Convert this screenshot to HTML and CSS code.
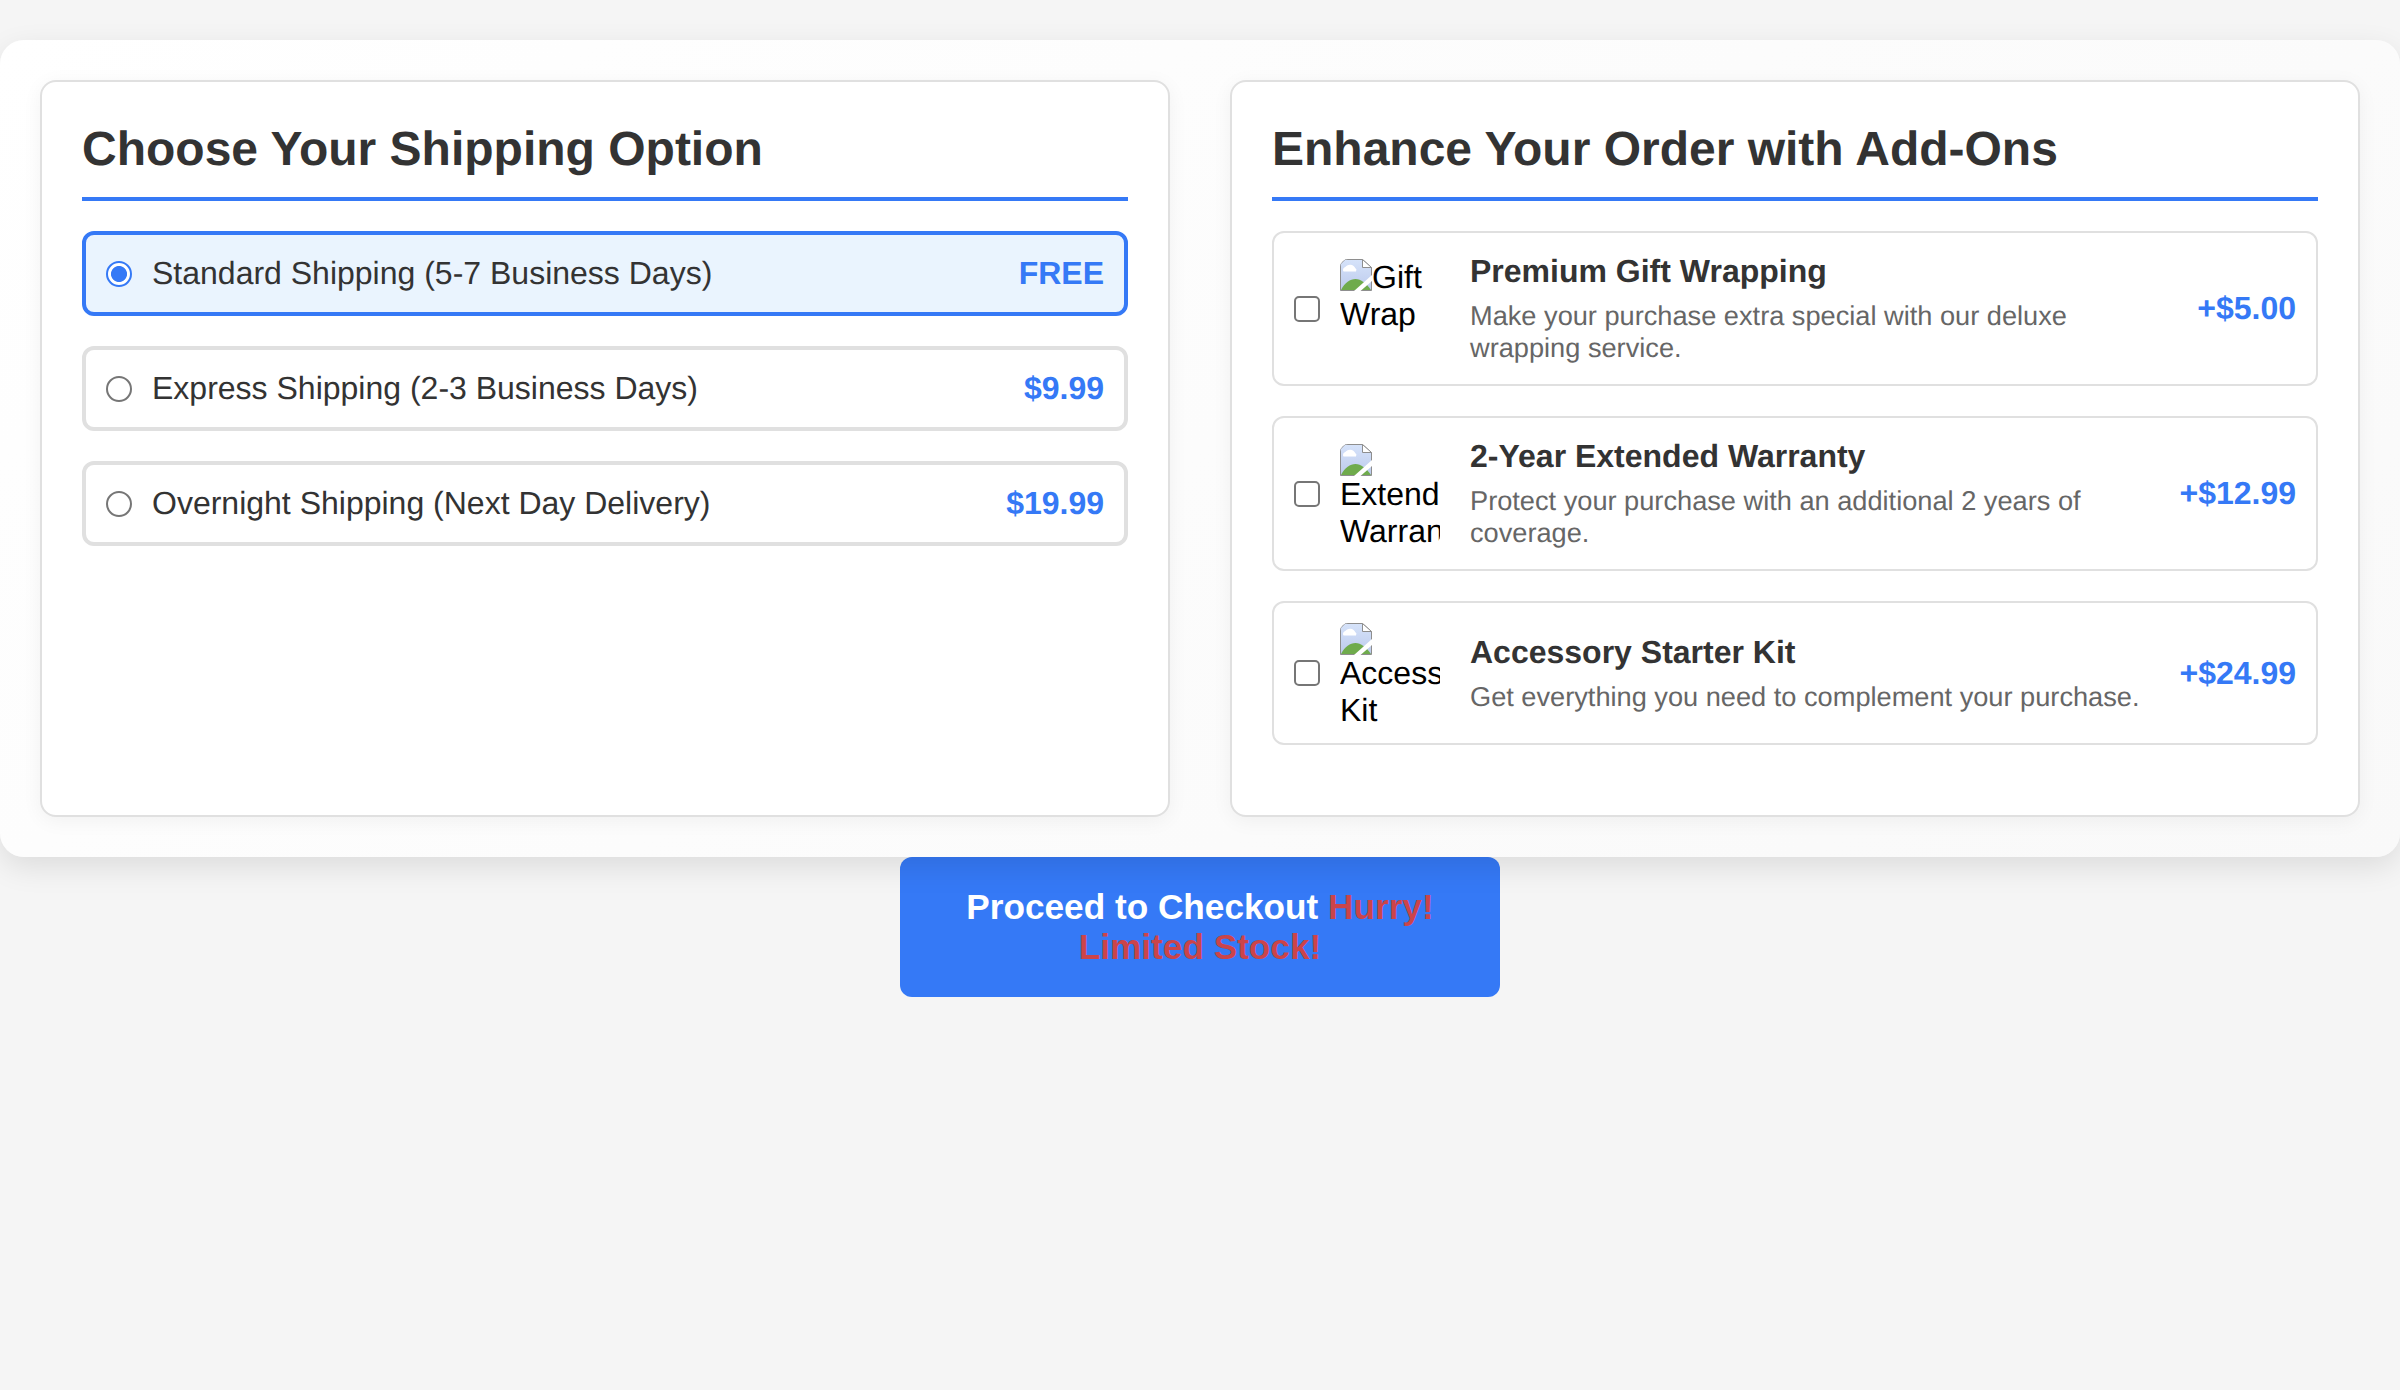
FILE: index.html
```html
<!DOCTYPE html>
<html lang="en">
<head>
<meta charset="utf-8">
<title>Shipping and Add-Ons</title>
<link rel="stylesheet" href="styles.css">
</head>
<body>
<svg class="defs" width="0" height="0" aria-hidden="true">
  <defs>
    <linearGradient id="sky" x1="0" y1="0" x2="0" y2="1"><stop offset="0" stop-color="#d6e3fa"/><stop offset="1" stop-color="#bccaec"/></linearGradient>
    <symbol id="missing" viewBox="0 0 32 32">
      <path d="M5 .5H22.500L31.500 8.500V31.500H.5V5Z" fill="url(#sky)"/>
      <path d="M3.500 12.500a3 3 0 0 1 1.800-4.600A6 6 0 0 1 15.200 9a2.600 2.600 0 0 1 .8 3.500Z" fill="#fff"/>
      <path d="M1 31C5 23.500 10 20 15.500 20S26 24 31 31Z" fill="#6fab4c"/>
      <path d="M5 .5H22.500L31.500 8.500V31.500H.5V5Z" fill="none" stroke="#8e8e8e"/>
      <path d="M22.500 .5V8.500H31.500Z" fill="#fff" stroke="#8e8e8e"/>
      <path d="M14 32 32 16V22L20.500 32Z" fill="#fff"/>
    </symbol>
  </defs>
</svg>
<main class="container">
  <section class="card">
    <h2 class="heading">Choose Your Shipping Option</h2>
    <label class="option selected"><input class="control radio" type="radio" name="shipping" checked><span class="option-name">Standard Shipping (5-7 Business Days)</span><span class="price">FREE</span></label>
    <label class="option"><input class="control radio" type="radio" name="shipping"><span class="option-name">Express Shipping (2-3 Business Days)</span><span class="price">$9.99</span></label>
    <label class="option"><input class="control radio" type="radio" name="shipping"><span class="option-name">Overnight Shipping (Next Day Delivery)</span><span class="price">$19.99</span></label>
  </section>
  <section class="card">
    <h2 class="heading">Enhance Your Order with Add-Ons</h2>
    <label class="addon">
      <input class="control" type="checkbox">
      <span class="thumb"><svg class="missing"><use href="#missing"/></svg>Gift Wrap</span>
      <span class="info"><span class="title">Premium Gift Wrapping</span><span class="desc">Make your purchase extra special with our deluxe wrapping service.</span></span>
      <span class="price">+$5.00</span>
    </label>
    <label class="addon">
      <input class="control" type="checkbox">
      <span class="thumb"><svg class="missing own-line"><use href="#missing"/></svg>Extended Warranty</span>
      <span class="info"><span class="title">2-Year Extended Warranty</span><span class="desc">Protect your purchase with an additional 2 years of coverage.</span></span>
      <span class="price">+$12.99</span>
    </label>
    <label class="addon">
      <input class="control" type="checkbox">
      <span class="thumb"><svg class="missing own-line"><use href="#missing"/></svg>Accessory Kit</span>
      <span class="info"><span class="title">Accessory Starter Kit</span><span class="desc">Get everything you need to complement your purchase.</span></span>
      <span class="price">+$24.99</span>
    </label>
  </section>
</main>
<button class="checkout">Proceed to Checkout <span class="urgent">Hurry! Limited Stock!</span></button>
</body>
</html>
```
FILE: styles.css
```css
* { box-sizing: border-box; }
body {
  margin: 0;
  padding-top: 40px;
  min-height: 1390px;
  background: #f5f5f5;
  font: 32px/37px "Liberation Sans", Arial, sans-serif;
  color: #333;
  text-rendering: geometricPrecision;
}
.defs { position: absolute; }
.container {
  position: relative;
  z-index: 1;
  display: flex;
  gap: 60px;
  padding: 40px;
  border-radius: 24px;
  background: linear-gradient(145deg, #fff, #f9f9f9);
  box-shadow: 0 10px 30px rgba(0, 0, 0, .1);
}
.card {
  flex: 1;
  display: flex;
  flex-direction: column;
  gap: 30px;
  padding: 40px 40px 70px;
  border: 2px solid #e0e0e0;
  border-radius: 16px;
  background: #fff;
  box-shadow: 0 4px 20px rgba(0, 0, 0, .05);
}
.heading {
  margin: 0;
  padding-bottom: 20px;
  border-bottom: 4px solid #3579f6;
  font-size: 48px;
  line-height: 55px;
}
.option, .addon {
  display: flex;
  align-items: center;
  border: 2px solid #e0e0e0;
  border-radius: 12px;
  padding: 20px;
}
.option { border-width: 4px; }
.option.selected { border-color: #3579f6; background: #eaf4fe; }
.control {
  appearance: none;
  flex: none;
  width: 26px;
  height: 26px;
  margin: 0 20px 0 0;
  border: 2px solid #767676;
  border-radius: 5px;
  background: #fff;
}
.radio { border-radius: 50%; }
.radio:checked {
  border-color: #3579f6;
  background: radial-gradient(circle, #3579f6 7.600px, #fff 8.400px);
}
.option-name, .info { flex: 1; }
.info { margin-right: 30px; }
.price { font-weight: bold; color: #3579f6; }
.thumb {
  flex: none;
  width: 100px;
  height: 100px;
  margin-right: 30px;
  overflow: hidden;
  border-radius: 8px;
  color: #000;
}
.missing { width: 32px; height: 32px; vertical-align: -3px; }
.missing.own-line { display: block; }
.title, .desc { display: block; }
.title { font-weight: bold; }
.desc { margin-top: 10px; font-size: 27.2px; line-height: 32px; color: #666; }
.checkout {
  display: block;
  width: 600px;
  margin: 0 auto;
  padding: 30px 60px;
  border: 0;
  border-radius: 12px;
  background: #3579f6;
  color: #fff;
  font: bold 35.2px/40px "Liberation Sans", Arial, sans-serif;
}
.urgent { color: #cb444a; }
```
